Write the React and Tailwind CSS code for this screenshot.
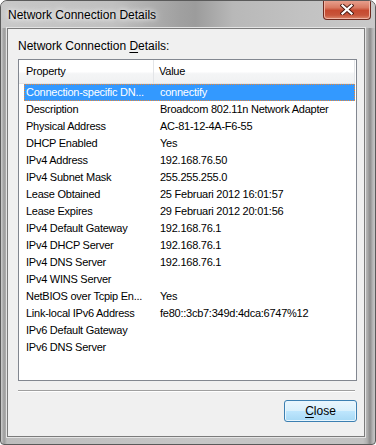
import React from "react";

const rows = [
  ["Connection-specific DN...", "connectify"],
  ["Description", "Broadcom 802.11n Network Adapter"],
  ["Physical Address", "AC-81-12-4A-F6-55"],
  ["DHCP Enabled", "Yes"],
  ["IPv4 Address", "192.168.76.50"],
  ["IPv4 Subnet Mask", "255.255.255.0"],
  ["Lease Obtained", "25 Februari 2012 16:01:57"],
  ["Lease Expires", "29 Februari 2012 20:01:56"],
  ["IPv4 Default Gateway", "192.168.76.1"],
  ["IPv4 DHCP Server", "192.168.76.1"],
  ["IPv4 DNS Server", "192.168.76.1"],
  ["IPv4 WINS Server", ""],
  ["NetBIOS over Tcpip En...", "Yes"],
  ["Link-local IPv6 Address", "fe80::3cb7:349d:4dca:6747%12"],
  ["IPv6 Default Gateway", ""],
  ["IPv6 DNS Server", ""],
];

export default function App() {
  return (
    <div
      className="w-[376px] h-[445px] overflow-hidden rounded-t-[7px] rounded-b-[4px] border border-[#5a5a5a] flex flex-col bg-[linear-gradient(to_right,#cfcfcf_0px,#9c9c9c_3px,#bdbdbd_6px,#c6c6c6_200px,#c2c2c2_362px,#b0b0b0_366px,#8c8c8c_369px,#b8b8b8_372px,#d0d0d0_376px)]"
      style={{ fontFamily: '"Liberation Sans", Arial, sans-serif' }}
    >
      {/* Title bar */}
      <div className="h-[28px] flex items-start shrink-0 -mx-px -mt-px bg-[linear-gradient(to_right,#c8c8c8_0%,#c0c0c0_30%,#a0a0a0_48%,#9c9c9c_52%,#b8b8b8_62%,#c2c2c2_80%,#c9c9c9_100%)]">
        <div className="pl-[8px] pt-[8px] text-[12px] leading-[15px] text-black [text-shadow:0_0_5px_#ffffff,0_0_8px_#ffffff]">
          Network Connection Details
        </div>
        <div className="ml-auto mr-[5px] w-[48px] h-[20px] rounded-b-[4px] border border-t-0 border-[#6e2a1f] flex items-center justify-center bg-[linear-gradient(to_bottom,#e9a493_0%,#d97a62_40%,#c64a30_55%,#c8553b_80%,#dc8a6e_100%)] shadow-[inset_0_0_0_1px_#f0b4a4]">
          <svg width="14" height="11" viewBox="0 0 14 11">
            <path d="M2.5 1.5 L11.5 9.5 M11.5 1.5 L2.5 9.5" stroke="#4a1a12" strokeWidth="4" strokeLinecap="square" />
            <path d="M2.5 1.5 L11.5 9.5 M11.5 1.5 L2.5 9.5" stroke="#ffffff" strokeWidth="2.2" strokeLinecap="square" />
          </svg>
        </div>
      </div>

      {/* Client area */}
      <div className="ml-[6px] w-[358px] h-[409px] border border-[#7b7b7b] bg-[#f0f0f0] flex flex-col shrink-0 shadow-[0_0_0_1px_#e4e4e4]">
        <div className="pt-[10px] pl-[10px] text-[12px] leading-[15px] text-black">
          Network Connection <span className="underline underline-offset-2">D</span>etails:
        </div>

        <div className="mt-[5px] ml-[10px] w-[339px] h-[322px] border border-[#828790] bg-white flex flex-col text-[11px] tracking-[-0.25px] text-black">
          <div className="h-[24px] shrink-0 flex w-[336px] bg-[linear-gradient(to_bottom,#ffffff_0%,#ffffff_50%,#f4f5f6_60%,#f0f1f2_100%)] border-b border-[#e5e5e5]">
            <div className="w-[135px] pl-[7px] flex items-center border-r border-[#e3e5e8]">Property</div>
            <div className="flex-1 pl-[5px] flex items-center border-r border-[#e3e5e8]">Value</div>
          </div>
          <div className="flex flex-col">
            {rows.map(([k, v], i) => {
              const sel = i === 0;
              return (
                <div
                  key={i}
                  className={
                    sel
                      ? "ml-[5px] w-[331px] h-[17px] flex items-center bg-[#3399ff] text-white border border-dotted border-[#ee8833]"
                      : "ml-[5px] w-[331px] h-[17px] flex items-center border border-transparent"
                  }
                >
                  <div className="w-[129px] pl-[1px] whitespace-nowrap overflow-hidden">{k}</div>
                  <div className="pl-[6px] whitespace-nowrap">{v}</div>
                </div>
              );
            })}
          </div>
        </div>

        <div className="mt-[9px] ml-[10px] w-[337px] h-px bg-[#a0a0a0]" />
        <div className="ml-[10px] w-[337px] h-px bg-white" />

        <div className="mt-[8px] ml-[276px] w-[73px] h-[22px] rounded-[3px] border border-[#3c7fb1] bg-[linear-gradient(to_bottom,#eaf6fd_0%,#d9f0fc_50%,#bee6fd_51%,#a7d9f5_100%)] shadow-[inset_0_0_0_1px_#e8f6fe] flex items-center justify-center text-[12px] text-black">
          <span><span className="underline underline-offset-2">C</span>lose</span>
        </div>
      </div>
    </div>
  );
}
